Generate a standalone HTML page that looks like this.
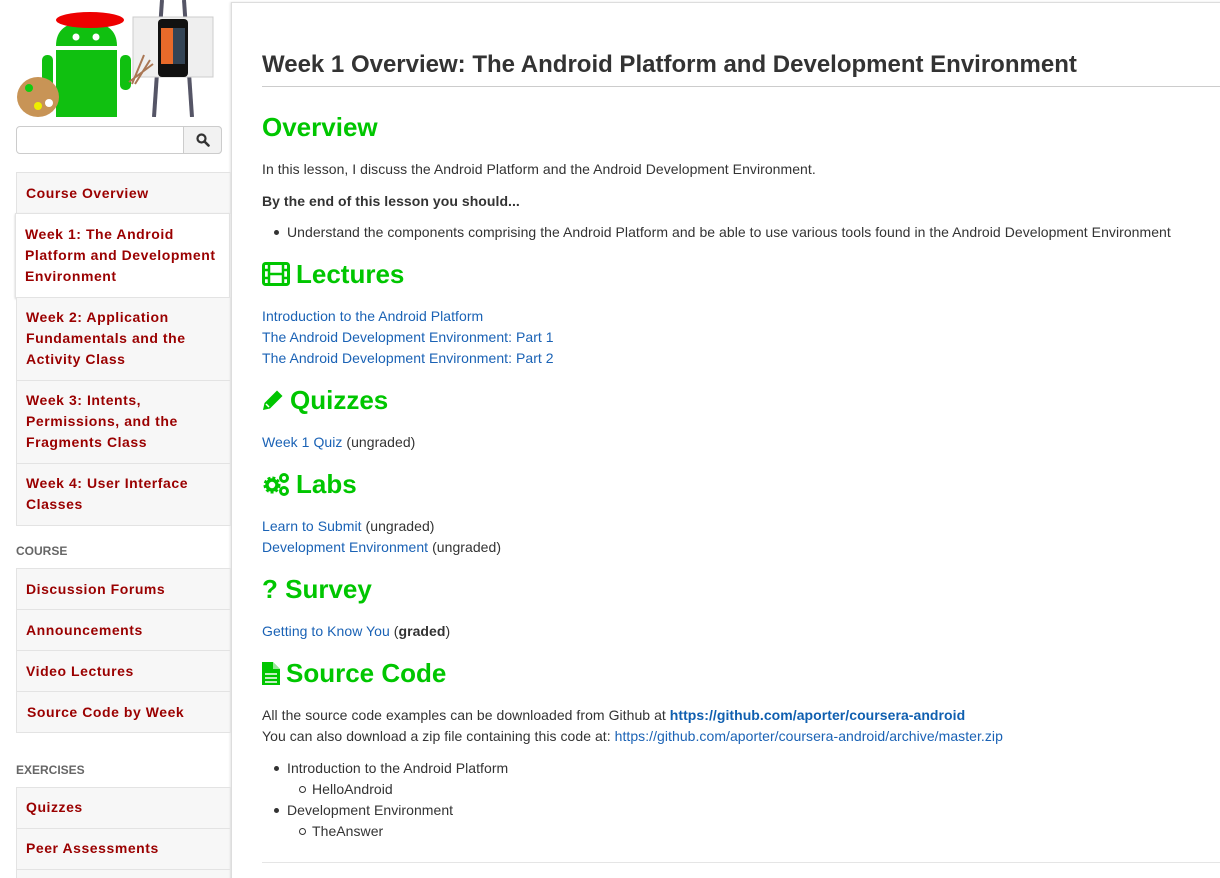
<!DOCTYPE html>
<html><head><meta charset="utf-8"><style>
*{margin:0;padding:0;box-sizing:border-box}
html,body{width:1220px;height:878px;overflow:hidden}
body{background:#fff;font-family:"Liberation Sans",Arial,sans-serif;position:relative;color:#333}
.a{position:absolute;white-space:nowrap}
.box{position:absolute;left:16px;width:215px;background:#f7f7f7;border:1px solid #e3e3e3}
.nav{position:absolute;left:26px;font-size:14px;font-weight:bold;color:#9a0000;line-height:21px;white-space:nowrap;letter-spacing:0.55px}
.sec{position:absolute;left:16px;font-size:12px;font-weight:bold;color:#666;line-height:14px}
.t{position:absolute;left:262px;font-size:14px;line-height:20px;white-space:nowrap;color:#333;letter-spacing:0.05px}
.t a{color:#1a62b5;text-decoration:none}
.h{position:absolute;left:262px;font-size:26px;font-weight:bold;color:#00c600;line-height:30px;white-space:nowrap;display:flex;align-items:center;gap:6px}
</style></head><body>
<!-- logo -->
<svg class="a" style="left:16px;top:0" width="206" height="117" viewBox="0 0 206 117">
<rect x="0" y="0" width="206" height="117" fill="#fff"/>
<line x1="146" y1="0" x2="138" y2="117" stroke="#556" stroke-width="4"/>
<line x1="168" y1="0" x2="176" y2="117" stroke="#556" stroke-width="4"/>
<rect x="117" y="17" width="80" height="60" fill="#efefef" stroke="#ccc"/>
<rect x="142" y="19" width="30" height="58" rx="4" fill="#111"/>
<rect x="145" y="28" width="24" height="36" fill="#e86a2a"/>
<rect x="157" y="28" width="12" height="36" fill="#345"/>
<path d="M40 46 Q40 22 70 22 Q101 22 101 46Z" fill="#10c010"/>
<ellipse cx="74" cy="20" rx="34" ry="8" fill="#e00"/>
<circle cx="60" cy="37" r="3.5" fill="#fff"/><circle cx="80" cy="37" r="3.5" fill="#fff"/>
<rect x="40" y="50" width="61" height="67" fill="#10c010"/>
<rect x="26" y="55" width="11" height="35" rx="5" fill="#10c010"/>
<rect x="104" y="55" width="11" height="35" rx="5" fill="#10c010"/>
<path d="M116 84 L128 55 M119 84 L134 60 M113 82 L137 64" stroke="#a75" stroke-width="2"/>
<ellipse cx="22" cy="97" rx="21" ry="20" fill="#c89456"/>
<circle cx="13" cy="88" r="4" fill="#1c1"/><circle cx="22" cy="106" r="4" fill="#ee0"/><circle cx="33" cy="103" r="4" fill="#fff"/>
</svg>
<!-- search -->
<div class="a" style="left:16px;top:126px;width:206px;height:28px;border:1px solid #ccc;border-radius:4px;background:#fff"></div>
<div class="a" style="left:183px;top:126px;width:39px;height:28px;border:1px solid #ccc;border-radius:0 4px 4px 0;background:#f2f2f2"></div>
<svg class="a" style="left:196px;top:133px" width="14" height="14" viewBox="0 0 14 14"><circle cx="5.5" cy="5.5" r="4" fill="none" stroke="#333" stroke-width="2.2"/><line x1="8.5" y1="8.5" x2="12.5" y2="12.5" stroke="#333" stroke-width="2.6" stroke-linecap="round"/></svg>
<!-- sidebar -->
<div class="box" style="top:172px;height:42px"></div>
<div class="box" style="top:213px;height:85px;left:15px;background:#fff;box-shadow:0 1px 2px #ccc"></div>
<div class="box" style="top:297px;height:84px"></div>
<div class="box" style="top:380px;height:84px"></div>
<div class="box" style="top:463px;height:63px"></div>
<div class="nav" style="top:183px">Course Overview</div>
<div class="nav" style="top:224px;left:25px">Week 1: The Android<br>Platform and Development<br>Environment</div>
<div class="nav" style="top:307px">Week 2: Application<br>Fundamentals and the<br>Activity Class</div>
<div class="nav" style="top:390px">Week 3: Intents,<br>Permissions, and the<br>Fragments Class</div>
<div class="nav" style="top:473px">Week 4: User Interface<br>Classes</div>
<div class="sec" style="top:544px">COURSE</div>
<div class="box" style="top:568px;height:42px"></div>
<div class="box" style="top:609px;height:42px"></div>
<div class="box" style="top:650px;height:42px"></div>
<div class="box" style="top:691px;height:42px"></div>
<div class="nav" style="top:579px">Discussion Forums</div>
<div class="nav" style="top:620px">Announcements</div>
<div class="nav" style="top:661px">Video Lectures</div>
<div class="nav" style="top:702px;left:27px">Source Code by Week</div>
<div class="sec" style="top:763px">EXERCISES</div>
<div class="box" style="top:787px;height:42px"></div>
<div class="box" style="top:828px;height:42px"></div>
<div class="box" style="top:869px;height:42px"></div>
<div class="nav" style="top:797px">Quizzes</div>
<div class="nav" style="top:838px">Peer Assessments</div>
<!-- main panel -->
<div class="a" style="left:231px;top:2px;width:1000px;height:900px;border-left:1px solid #ddd;border-top:1px solid #ddd;box-shadow:-1px 0 2px #e5e5e5"></div>
<div class="a" style="left:262px;top:50px;font-size:24px;font-weight:bold;color:#333;line-height:30px">Week 1 Overview: The Android Platform and Development Environment</div>
<div class="a" style="left:262px;top:86px;width:958px;border-top:1px solid #ccc"></div>
<div class="h" style="top:112px">Overview</div>
<div class="t" style="top:159px">In this lesson, I discuss the Android Platform and the Android Development Environment.</div>
<div class="t" style="top:191px;font-weight:bold">By the end of this lesson you should...</div>
<div class="t" style="top:222px;left:287px">Understand the components comprising the Android Platform and be able to use various tools found in the Android Development Environment</div>
<div class="a" style="left:274px;top:230px;width:5px;height:5px;border-radius:50%;background:#333"></div>
<div class="h" style="top:259px"><svg width="28" height="24" viewBox="0 0 28 24"><rect x="1.5" y="1.5" width="25" height="21" rx="2" fill="none" stroke="#00c600" stroke-width="3"/><path d="M7 2V22M21 2V22M2 8H7M2 16H7M21 8H26M21 16H26M7 12H21" stroke="#00c600" stroke-width="2.5"/></svg>Lectures</div>
<div class="t" style="top:306px"><a>Introduction to the Android Platform</a></div>
<div class="t" style="top:327px"><a>The Android Development Environment: Part 1</a></div>
<div class="t" style="top:348px"><a>The Android Development Environment: Part 2</a></div>
<div class="h" style="top:385px"><svg width="22" height="22" viewBox="0 0 22 22"><path d="M1 21 L2.5 14 L15 1.5 L20.5 7 L8 19.5Z" fill="#00c600"/><path d="M4 15 L7 18" stroke="#fff" stroke-width="1.5"/></svg>Quizzes</div>
<div class="t" style="top:432px"><a>Week 1 Quiz</a> (ungraded)</div>
<div class="h" style="top:469px"><svg width="28" height="24" viewBox="0 0 28 24"><circle cx="10" cy="13" r="6.5" fill="none" stroke="#00c600" stroke-width="4" stroke-dasharray="2.6 1.8"/><circle cx="10" cy="13" r="5" fill="none" stroke="#00c600" stroke-width="3.5"/><circle cx="22" cy="6" r="3.5" fill="none" stroke="#00c600" stroke-width="3"/><circle cx="22" cy="19" r="3.5" fill="none" stroke="#00c600" stroke-width="3"/></svg>Labs</div>
<div class="t" style="top:516px"><a>Learn to Submit</a> (ungraded)</div>
<div class="t" style="top:537px"><a>Development Environment</a> (ungraded)</div>
<div class="h" style="top:574px">? Survey</div>
<div class="t" style="top:621px"><a>Getting to Know You</a> (<b>graded</b>)</div>
<div class="h" style="top:658px"><svg width="18" height="24" viewBox="0 0 18 24"><path d="M0 1H11L18 8V24H0Z" fill="#00c600"/><path d="M11 1V8H18" fill="#fff" opacity=".6"/><path d="M3 13H15M3 17H15M3 21H15" stroke="#fff" stroke-width="1.5"/></svg>Source Code</div>
<div class="t" style="top:705px">All the source code examples can be downloaded from Github at <a style="font-weight:bold;color:#0f5fb0">https://github.com/aporter/coursera-android</a></div>
<div class="t" style="top:726px">You can also download a zip file containing this code at: <a>https://github.com/aporter/coursera-android/archive/master.zip</a></div>
<div class="t" style="top:758px;left:287px">Introduction to the Android Platform</div>
<div class="a" style="left:274px;top:766px;width:5px;height:5px;border-radius:50%;background:#333"></div>
<div class="t" style="top:779px;left:312px">HelloAndroid</div>
<div class="a" style="left:299px;top:786px;width:7px;height:7px;border-radius:50%;border:1px solid #333"></div>
<div class="t" style="top:800px;left:287px">Development Environment</div>
<div class="a" style="left:274px;top:808px;width:5px;height:5px;border-radius:50%;background:#333"></div>
<div class="t" style="top:821px;left:312px">TheAnswer</div>
<div class="a" style="left:299px;top:828px;width:7px;height:7px;border-radius:50%;border:1px solid #333"></div>
<div class="a" style="left:262px;top:862px;width:958px;border-top:1px solid #e5e5e5"></div>
</body></html>
